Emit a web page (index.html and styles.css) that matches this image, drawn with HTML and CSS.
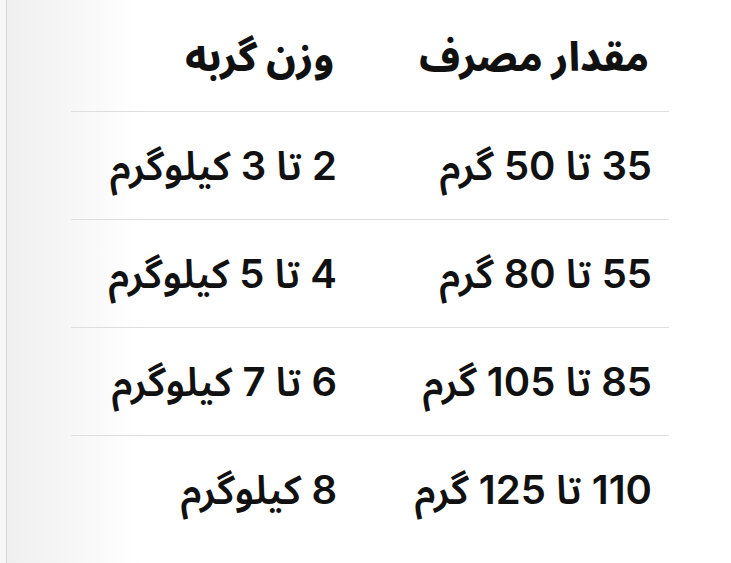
FILE: index.html
```html
<!DOCTYPE html>
<html lang="fa" dir="rtl">
<head>
<meta charset="utf-8">
<link rel="stylesheet" href="styles.css">
</head>
<body>
<div class="page">
  <div class="table">
    <div class="row head">
      <div class="cell c1">مقدار مصرف</div>
      <div class="cell c2">وزن گربه</div>
    </div>
    <div class="row">
      <div class="cell c1">35 تا 50 گرم</div>
      <div class="cell c2">2 تا 3 کیلوگرم</div>
    </div>
    <div class="row">
      <div class="cell c1">55 تا 80 گرم</div>
      <div class="cell c2">4 تا 5 کیلوگرم</div>
    </div>
    <div class="row">
      <div class="cell c1">85 تا 105 گرم</div>
      <div class="cell c2">6 تا 7 کیلوگرم</div>
    </div>
    <div class="row last">
      <div class="cell c1">110 تا 125 گرم</div>
      <div class="cell c2">8 کیلوگرم</div>
    </div>
  </div>
</div>
</body>
</html>
```
FILE: styles.css
```css
html, body {
  margin: 0;
  padding: 0;
  height: 100%;
}
body {
  background:
    linear-gradient(to right, #f7f7f7 0, #f7f7f7 6px, #d6d6d6 6px, #d6d6d6 7px, #efefef 7px, #ffffff 140px);
  font-family: Inter, "Noto Sans Arabic", "DejaVu Sans", sans-serif;
  color: #111;
  overflow: hidden;
}
.page {
  display: flex;
  flex-direction: column;
  align-items: flex-start;
  padding-right: 62px;
  padding-top: 4px;
}
.table {
  width: 598px;
  display: flex;
  flex-direction: column;
}
.row {
  display: grid;
  grid-template-columns: 315px 283px;
  height: 107px;
  border-bottom: 1px solid #dedede;
  align-items: center;
}
.row.last {
  border-bottom: none;
}
.cell {
  padding-right: 17px;
  font-size: 40px;
  font-weight: 600;
  line-height: 1;
  white-space: nowrap;
}
.head .cell {
  font-weight: 800;
  padding-right: 20px;
  padding-bottom: 2px;
}
```
